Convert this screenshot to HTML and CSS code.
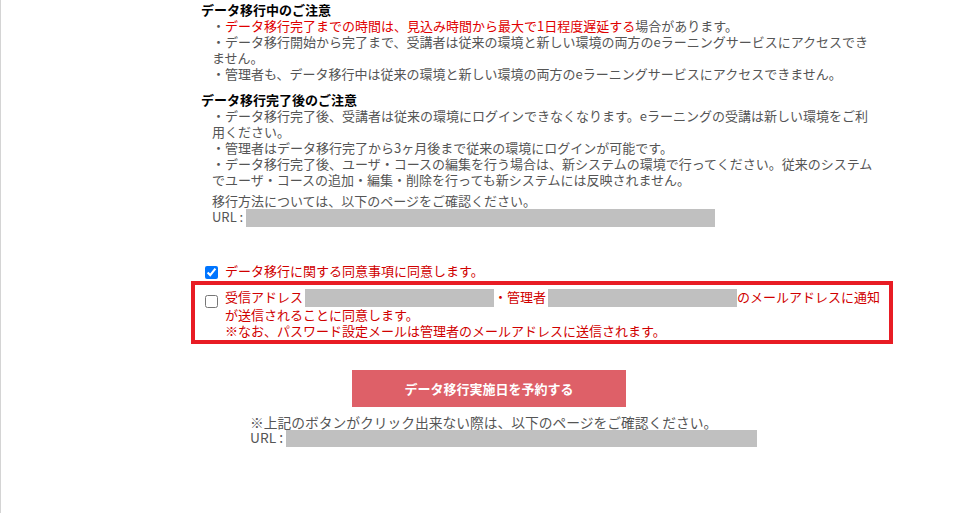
FILE: index.html
```html
<!DOCTYPE html>
<html lang="ja">
<head>
    <meta charset="UTF-8">
    <title>データ移行のご案内</title>
    <link rel="stylesheet" href="styles.css">
</head>
<body>

<div class="page">
    <div class="content">

        <div class="notice">
            <h3>データ移行中のご注意</h3>
            <div class="notice-body">
                <div>・<span class="warn">データ移行完了までの時間は、見込み時間から最大で1日程度遅延する</span>場合があります。</div>
                <div>・データ移行開始から完了まで、受講者は従来の環境と新しい環境の両方のeラーニングサービスにアクセスできません。</div>
                <div>・管理者も、データ移行中は従来の環境と新しい環境の両方のeラーニングサービスにアクセスできません。</div>
            </div>
        </div>

        <div class="notice">
            <h3>データ移行完了後のご注意</h3>
            <div class="notice-body">
                <div>・データ移行完了後、受講者は従来の環境にログインできなくなります。eラーニングの受講は新しい環境をご利用ください。</div>
                <div>・管理者はデータ移行完了から3ヶ月後まで従来の環境にログインが可能です。</div>
                <div>・データ移行完了後、ユーザ・コースの編集を行う場合は、新システムの環境で行ってください。従来のシステムでユーザ・コースの追加・編集・削除を行っても新システムには反映されません。</div>
            </div>
            <div class="notice-body guide">
                <div>移行方法については、以下のページをご確認ください。</div>
                <div>URL : <span class="masked url-mask"></span></div>
            </div>
        </div>

        <label class="agree">
            <input type="checkbox" checked>
            <span>データ移行に関する同意事項に同意します。</span>
        </label>

        <div class="agree-box">
            <label class="agree">
                <input type="checkbox">
                <span>受信アドレス<span class="masked mail-mask"></span>・管理者<span class="masked mail-mask"></span>のメールアドレスに通知が送信されることに同意します。<br>※なお、パスワード設定メールは管理者のメールアドレスに送信されます。</span>
            </label>
        </div>

        <button class="reserve">データ移行実施日を予約する</button>

        <div class="fallback">
            <div>※上記のボタンがクリック出来ない際は、以下のページをご確認ください。</div>
            <div>URL : <span class="masked link-mask"></span></div>
        </div>

    </div>
</div>

</body>
</html>
```

FILE: styles.css
```css
body {
    margin: 0;
    font-family: "Noto Sans CJK JP", "Noto Sans", sans-serif;
    font-size: 13px;
    line-height: 16px;
    color: #555;
    background: #fff;
}
.page {
    border-left: 1px solid #d4d4d4;
    min-height: 513px;
}
.content {
    margin-left: 190px;
    width: 702px;
    padding-top: 2px;
}
.notice {
    padding: 0 10px;
    margin-bottom: 10px;
}
.notice h3 {
    margin: 0;
    font-size: 13px;
    line-height: 16px;
    color: #000;
}
.notice-body {
    padding-left: 11px;
    width: 664px;
}
.notice-body.guide {
    margin-top: 5px;
}
.warn {
    color: #e00000;
}
.masked {
    display: inline-block;
    background: #c0c0c0;
    height: 18px;
    vertical-align: -5px;
}
.url-mask {
    width: 469px;
}
.mail-mask {
    width: 189px;
    margin-left: 2px;
}
.link-mask {
    width: 471px;
}
.agree {
    display: flex;
    align-items: flex-start;
    color: #d00000;
}
.agree input {
    margin: 3px 7px 0 14px;
    width: 13px;
    height: 13px;
    flex-shrink: 0;
}
.content > .agree {
    margin-top: 36px;
}
.agree-box {
    margin-top: 2px;
    border: 4px solid #e81c24;
    padding: 4px 6px 4px 0;
    height: 47px;
    box-sizing: content-box;
    overflow: hidden;
}
.agree-box .agree input {
    margin: 6px 7px 0 10px;
}
.reserve {
    display: block;
    margin: 26px 0 0 161px;
    width: 274px;
    height: 37px;
    border: none;
    background: #de6068;
    color: #fff;
    font-family: inherit;
    font-size: 13px;
    font-weight: bold;
    cursor: pointer;
}
.fallback {
    margin: 8px 0 0 59px;
    font-size: 13.75px;
    line-height: 15px;
}
.fallback .masked {
    height: 17px;
    vertical-align: -4px;
}
```
